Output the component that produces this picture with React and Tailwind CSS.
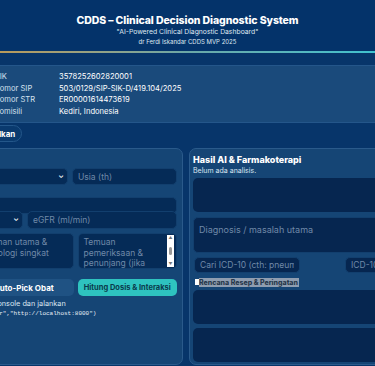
import React from 'react';

const font = { fontFamily: 'Inter, "Open Sans", sans-serif' };

const field =
  'h-full w-full rounded-[5px] border border-[#123f6e] bg-[#052b57] px-[5px] text-[8.5px] text-white placeholder:text-[#7089a8] outline-none';

export default function App() {
  return (
    <div className="min-h-[366px] bg-[#07356a] overflow-hidden text-white" style={font}>
      <header className="h-[51px] bg-[#04336a] flex flex-col items-center pt-[14px]">
        <h1 className="text-[10.5px] font-extrabold leading-[13px] tracking-[-0.1px]">
          CDDS – Clinical Decision Diagnostic System
        </h1>
        <div className="text-[6.8px] leading-[10px] text-[#dfe7f1]">"AI-Powered Clinical Diagnostic Dashboard"</div>
        <div className="text-[6px] leading-[10px] text-[#dfe7f1]">dr Ferdi Iskandar CDDS MVP 2025</div>
      </header>
      <div className="h-[2px] bg-gradient-to-r from-[#b89a5a] via-[#6aa7a7] to-[#3fc2cf]" />

      <div className="flex justify-center">
        <div className="w-[439px] shrink-0 pt-[12px]">
          <div className="rounded-[6px] border border-[#24568a] bg-[#1a4a7b] px-[25px] py-[5px] text-[7.6px] leading-[11.5px]">
            {[
              ['NIK', '3578252602820001'],
              ['Nomor SIP', '503/0129/SIP-SIK-D/419.104/2025'],
              ['Nomor STR', 'ER00001614473619'],
              ['Domisili', 'Kediri, Indonesia'],
            ].map(([k, v]) => (
              <div key={k} className="flex">
                <div className="w-[65px] text-[#d5e0ee]">{k}</div>
                <div className="text-white">{v}</div>
              </div>
            ))}
          </div>

          <div className="mt-[2px] flex">
            <button className="h-[17px] rounded-full border border-[#24578a] bg-[#0a3a6e] px-[6px] text-[8px] font-bold text-white">
              Tampilkan
            </button>
          </div>

          <div className="mt-[6px] grid grid-cols-[215px_218px] gap-[6px]">
            <section className="h-[217px] rounded-[7px] border border-[#2a5a8b] bg-[#154575] px-[5px] pt-[4px]">
              <div className="h-[15px] text-[9px] font-extrabold">Input</div>
              <div className="flex gap-[4px] h-[17px]">
                <div className="relative w-[94px] shrink-0">
                  <div className={field + ' flex items-center'}>Pilih</div>
                  <span className="absolute right-[4px] top-[3px] text-[7px] font-bold">⌄</span>
                </div>
                <input className={field} placeholder="Usia (th)" />
              </div>
              <div className="mt-[5px] h-[17px]">
                <input className={field} />
              </div>
              <div className="mt-[4px] flex gap-[4px] h-[18px]">
                <div className="relative w-[49px] shrink-0">
                  <div className={field + ' flex items-center'}>Ya</div>
                  <span className="absolute right-[4px] top-[3px] text-[7px] font-bold">⌄</span>
                </div>
                <input className={field} placeholder="eGFR (ml/min)" />
              </div>
              <div className="mt-[4px] grid grid-cols-2 gap-[4px] h-[36px]">
                <textarea
                  className={field + ' resize-none py-[3px] leading-[10.5px]'}
                  placeholder="Keluhan utama & kronologi singkat"
                />
                <div className="relative">
                  <textarea
                    className={field + ' resize-none py-[3px] pr-[14px] leading-[10.5px]'}
                    placeholder="Temuan pemeriksaan & penunjang (jika ada)"
                  />
                  <div className="absolute right-[3px] top-[2px] bottom-[2px] w-[7px] bg-white flex flex-col items-center justify-between py-[1px]">
                    <span className="text-[4px] leading-[4px] text-[#777]">▲</span>
                    <span className="w-[3px] h-[8px] rounded-full bg-[#999]" />
                    <span className="text-[4px] leading-[4px] text-[#777]">▼</span>
                  </div>
                </div>
              </div>
              <div className="mt-[10px] grid grid-cols-2 gap-[4px] h-[17px]">
                <button className="rounded-[5px] bg-[#1f5283] text-[8px] font-bold text-white">Auto-Pick Obat</button>
                <button className="rounded-[5px] bg-[#2ec3bf] text-[7.5px] font-bold text-[#0a3a4c]">
                  Hitung Dosis & Interaksi
                </button>
              </div>
              <div className="mt-[3px] text-[7.3px] leading-[10px] text-[#dbe6f2]">Buka console dan jalankan</div>
              <code
                className="block text-[6px] leading-[9px] text-[#e6eef7]"
                style={{ fontFamily: '"Liberation Mono", monospace' }}
              >
                ("server","http://localhost:8000")
              </code>
            </section>

            <section className="h-[217px] rounded-[7px] border border-[#2a5a8b] bg-[#154575] px-[3px] pt-[5px]">
              <div className="text-[9px] font-extrabold leading-[12px]">Hasil AI & Farmakoterapi</div>
              <div className="text-[7px] leading-[10px] text-[#dbe6f2]">Belum ada analisis.</div>
              <div className="mt-[2px] h-[34px] rounded-[5px] bg-[#062650]" />
              <div className="mt-[5px] h-[36px]">
                <textarea
                  className={field + ' resize-none py-[5px] !text-[9px] bg-[#062650] border-[#0f3a68]'}
                  placeholder="Diagnosis / masalah utama"
                />
              </div>
              <div className="mt-[4px] flex justify-between h-[16px]">
                <input
                  className={field + ' !w-[106px] ml-[1px] bg-[#062650]'}
                  placeholder="Cari ICD-10 (cth: pneumonia)"
                />
                <input className={field + ' !w-[58px] bg-[#062650]'} placeholder="ICD-10" />
              </div>
              <div className="mt-[4px] flex items-center h-[10px] ml-[2px]">
                <span className="w-[4px] h-[6px] bg-white" />
                <span className="bg-[#8f9db0] text-[#27384c] text-[7px] font-extrabold leading-[9px] pr-[1px]">
                  Rencana Resep & Peringatan
                </span>
              </div>
              <div className="mt-[3px] h-[34px] rounded-[5px] bg-[#062650]" />
              <div className="mt-[4px] h-[34px] rounded-[5px] bg-[#062650]" />
            </section>
          </div>
        </div>
      </div>
    </div>
  );
}
